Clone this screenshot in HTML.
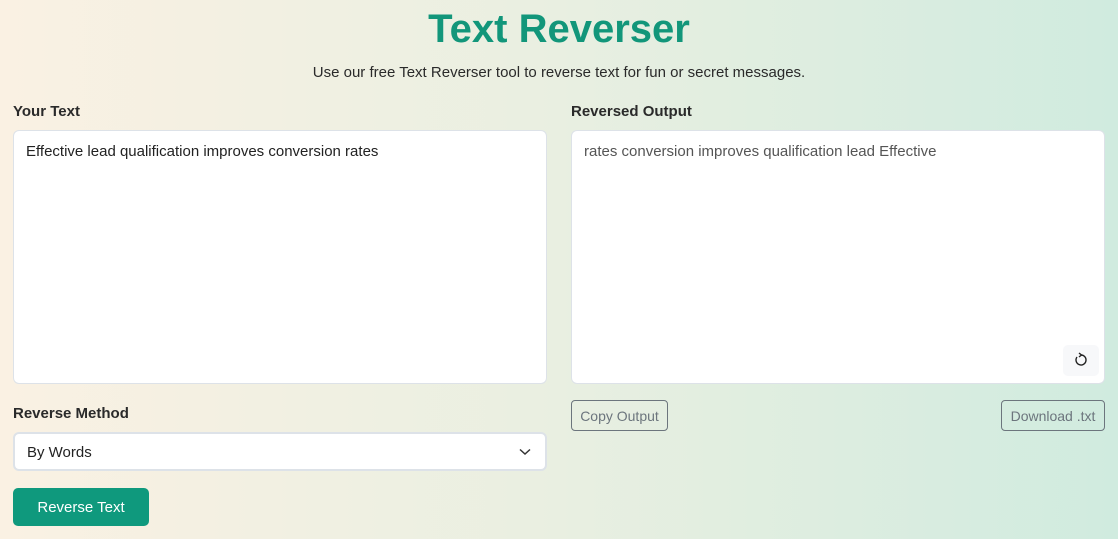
<!DOCTYPE html>
<html><head><meta charset="utf-8"><style>
*{box-sizing:border-box;margin:0;padding:0}
body{width:1118px;height:539px;overflow:hidden;font-family:"Liberation Sans",sans-serif;background:linear-gradient(90deg,#faf1e3 0%,#e9efe1 50%,#d0ebdf 100%);position:relative;color:#222}
.a{position:absolute}
h1{position:absolute;left:0;width:1118px;top:7px;text-align:center;font-size:40px;font-weight:bold;color:#12967a}
.sub{left:0;width:1118px;top:64px;text-align:center;font-size:15px;color:#2a2a2a}
.lbl{font-size:15px;font-weight:bold;color:#2a2a2a}
.ta{background:#fff;border:1px solid #dde2e8;border-radius:6px;padding:12px 12px;font-size:15px}
.btn2{border:1px solid #6c757d;border-radius:4px;color:#6c757d;font-size:14px;text-align:center;line-height:31px}
</style></head><body>
<h1>Text Reverser</h1>
<div class="a sub">Use our free Text Reverser tool to reverse text for fun or secret messages.</div>
<div class="a lbl" style="left:13px;top:103px">Your Text</div>
<div class="a lbl" style="left:571px;top:103px">Reversed Output</div>
<div class="a ta" style="left:13px;top:130px;width:534px;height:254px;color:#222">Effective lead qualification improves conversion rates</div>
<div class="a ta" style="left:571px;top:130px;width:534px;height:254px;color:#555">rates conversion improves qualification lead Effective</div>
<div class="a" style="left:1063px;top:345px;width:36px;height:31px;background:#f7f8fa;border-radius:5px"><svg width="36" height="31" viewBox="0 0 36 31"><path d="M14 12 A5 5 0 1 0 18 10" fill="none" stroke="#222" stroke-width="1.4"/><path d="M16 8 L18.5 10 L16 12" fill="none" stroke="#222" stroke-width="1.4"/></svg></div>
<div class="a lbl" style="left:13px;top:405px">Reverse Method</div>
<div class="a" style="left:13px;top:432px;width:534px;height:39px;background:#fff;border:2px solid #dde2e8;border-radius:6px;font-size:15px;padding:10px 12px">By Words
<svg class="a" style="right:14px;top:14px" width="12" height="8" viewBox="0 0 12 8"><path d="M1 1.5 L6 6 L11 1.5" fill="none" stroke="#333" stroke-width="1.5"/></svg></div>
<div class="a" style="left:13px;top:488px;width:136px;height:38px;background:#0f997d;border-radius:5px;color:#fff;font-size:15px;text-align:center;line-height:40px">Reverse Text</div>
<div class="a btn2" style="left:571px;top:400px;width:97px;height:31px">Copy Output</div>
<div class="a btn2" style="left:1001px;top:400px;width:104px;height:31px">Download .txt</div>
</body></html>
